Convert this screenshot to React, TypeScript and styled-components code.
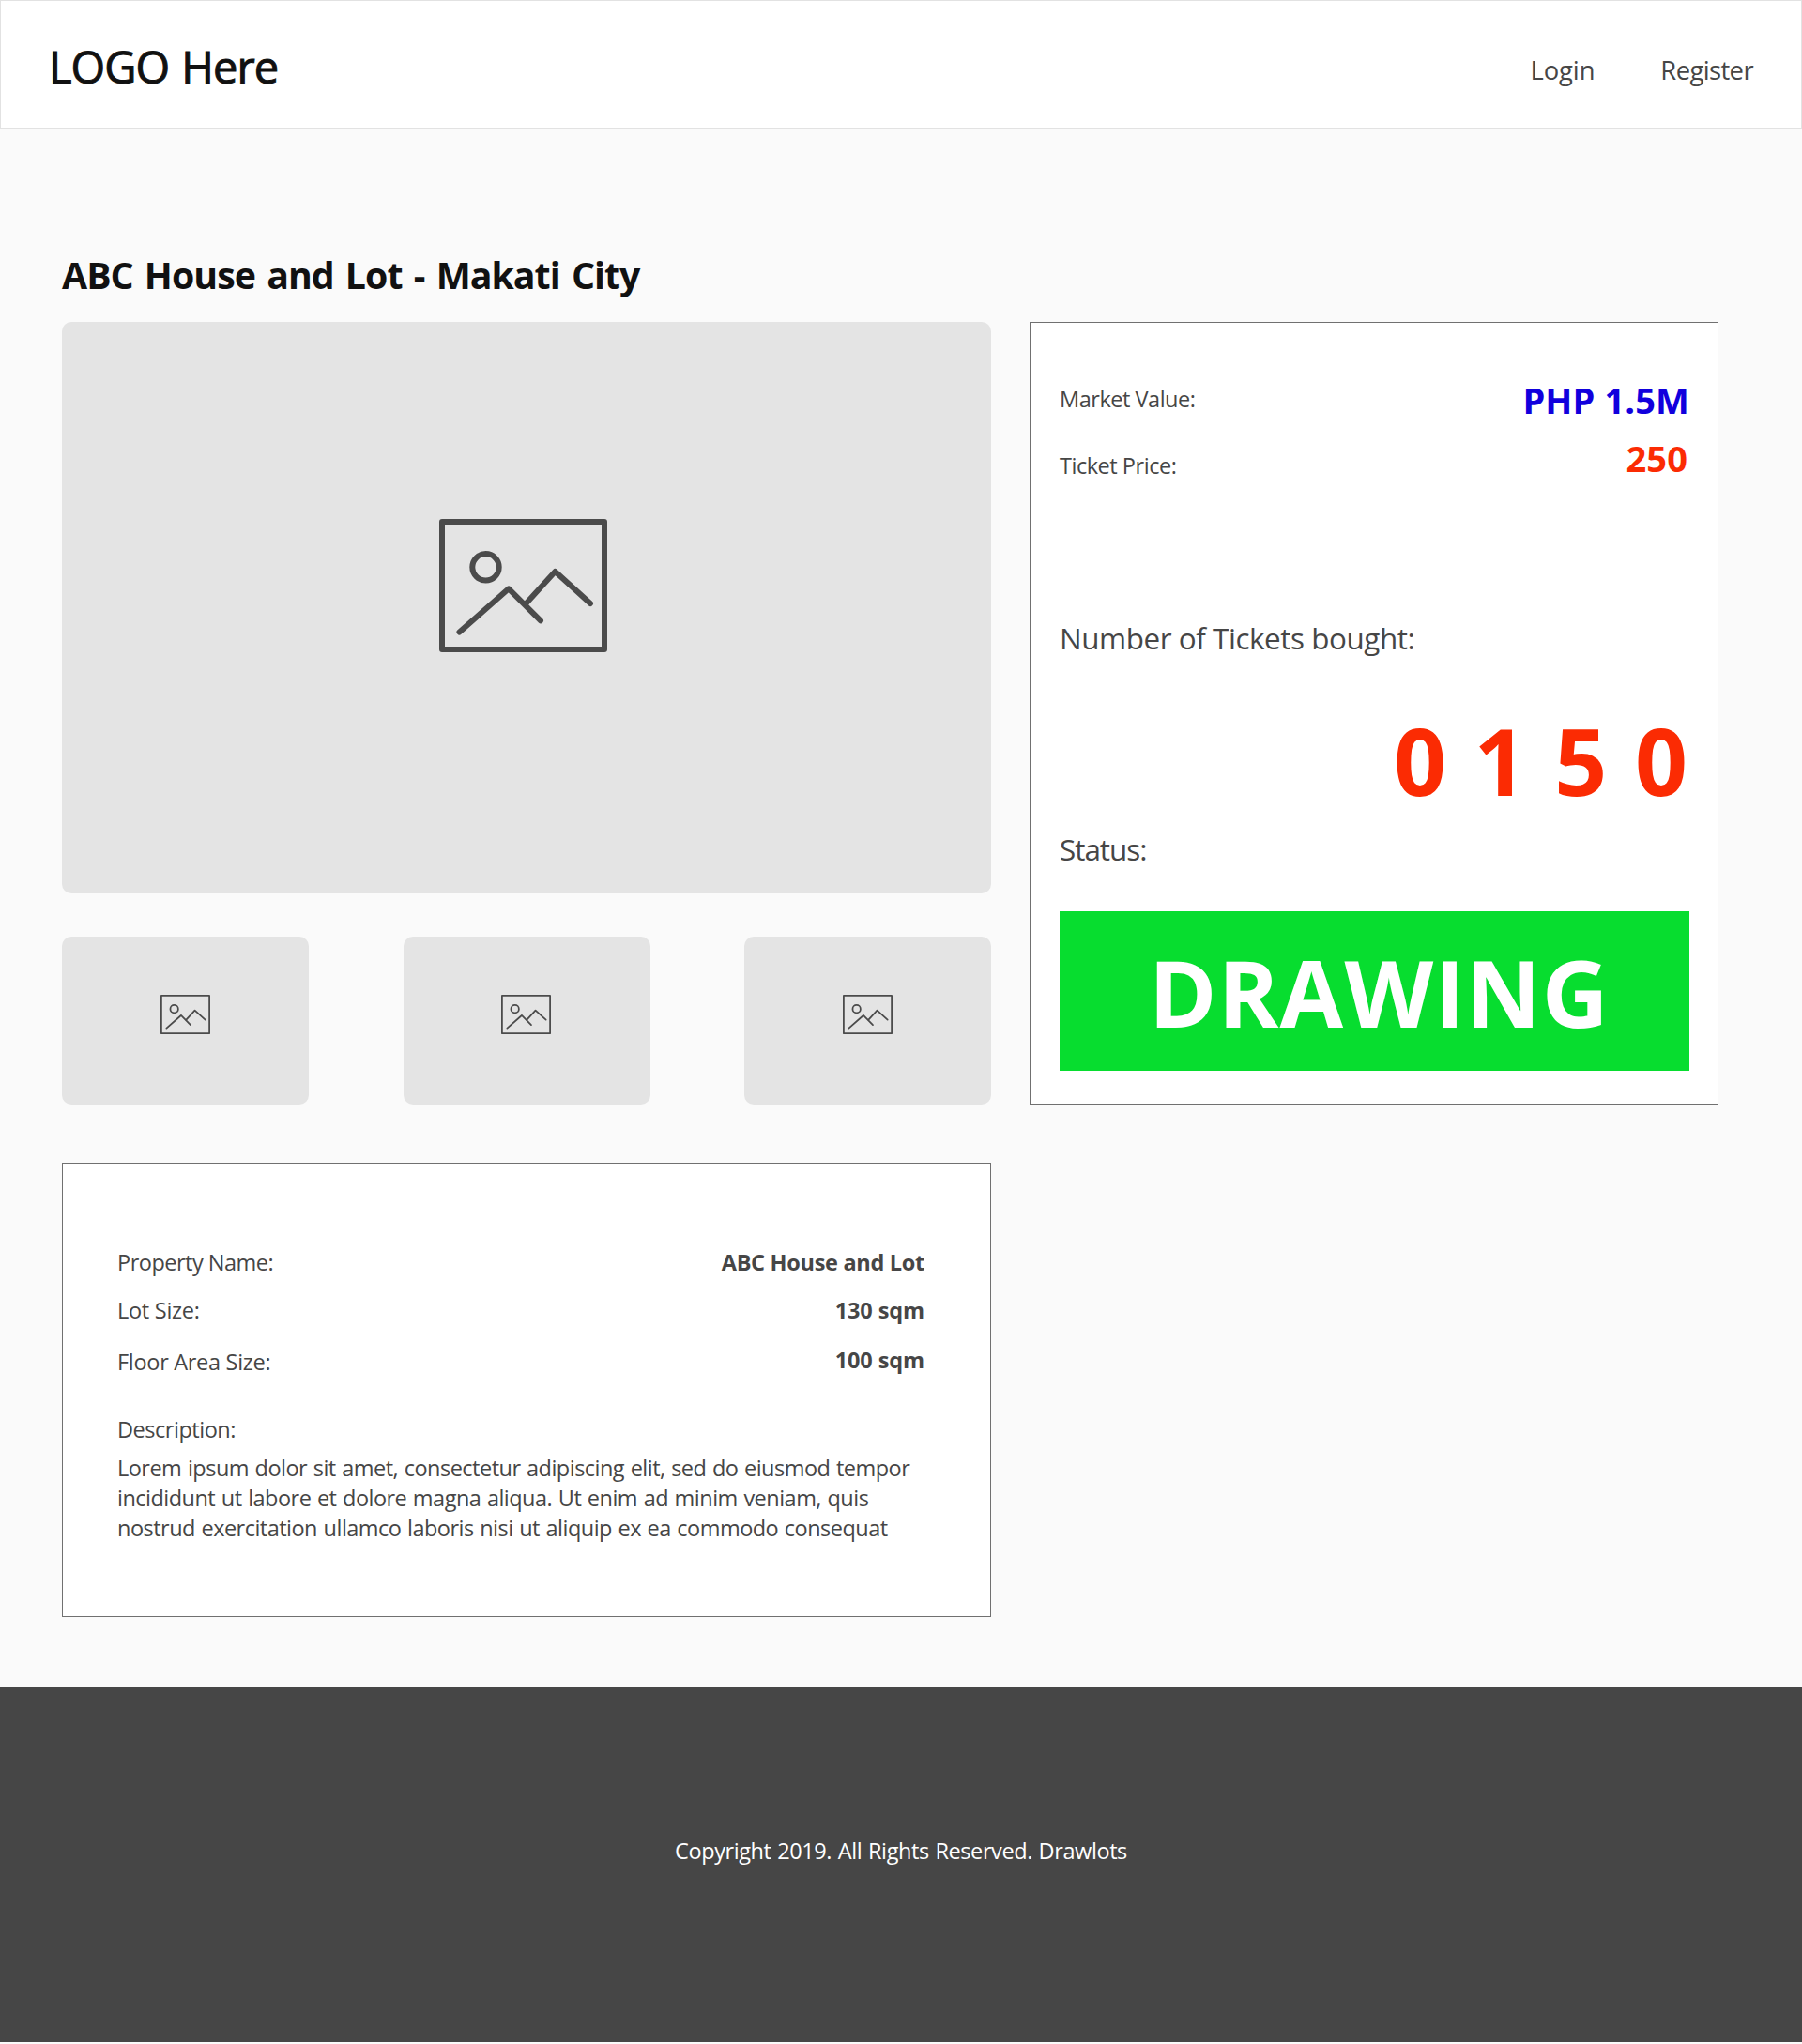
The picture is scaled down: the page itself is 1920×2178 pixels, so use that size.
import React from "react";
import styled, { createGlobalStyle } from "styled-components";

const colors = {
  page: "#fafafa",
  surface: "#ffffff",
  ink: "#111111",
  text: "#464646",
  line: "#707070",
  headerLine: "#e2e2e2",
  placeholder: "#e4e4e4",
  blue: "#1100dd",
  red: "#fb2b03",
  green: "#07dd2f",
};

const GlobalStyle = createGlobalStyle`
  *, *::before, *::after { box-sizing: border-box; }
  body {
    margin: 0;
    background: ${colors.page};
    color: ${colors.text};
    font-family: "Open Sans", "Noto Sans", sans-serif;
    font-kerning: normal;
  }
  h1, p, dl, dt, dd { margin: 0; }
`;

const Page = styled.div`
  width: 1920px;
  height: 2178px;
  display: flex;
  flex-direction: column;
`;

const Header = styled.header`
  display: flex;
  justify-content: space-between;
  align-items: flex-start;
  height: 137px;
  padding: 38px 51px 0 51px;
  background: ${colors.surface};
  border: 1px solid ${colors.headerLine};
`;

const Logo = styled.div`
  font-size: 47px;
  line-height: 64px;
  letter-spacing: -0.95px;
  word-spacing: 2px;
  color: ${colors.ink};
  -webkit-text-stroke: 1px ${colors.ink};
`;

const Nav = styled.nav`
  display: flex;
  gap: 70px;
  padding-top: 17px;
`;

const NavLink = styled.a<{ $tracking: number }>`
  font-size: 27.4px;
  line-height: 38px;
  letter-spacing: ${(p) => p.$tracking}px;
`;

const Main = styled.main`
  height: 1661px;
  padding: 129px 89px 0 66px;
`;

const Title = styled.h1`
  margin-bottom: 23px;
  font-size: 39.3px;
  line-height: 54px;
  font-weight: 700;
  letter-spacing: -0.98px;
  word-spacing: 3px;
  color: ${colors.ink};
`;

const Columns = styled.div`
  display: grid;
  grid-template-columns: 990px 734px;
  column-gap: 41px;
  align-items: start;
`;

const Hero = styled.div`
  display: flex;
  align-items: center;
  justify-content: center;
  height: 609px;
  padding: 0 7px 47px 0;
  border-radius: 10px;
  background: ${colors.placeholder};
`;

const Thumbs = styled.div`
  display: flex;
  justify-content: space-between;
  margin-top: 46px;
`;

const Thumb = styled.div`
  display: flex;
  align-items: center;
  justify-content: center;
  width: 263px;
  height: 179px;
  padding: 0 1px 13px 0;
  border-radius: 10px;
  background: ${colors.placeholder};
`;

const Picture = styled.svg<{ $width: number }>`
  display: block;
  width: ${(p) => p.$width}px;
  height: auto;
  fill: none;
  stroke: #4b4b4b;
  stroke-width: 6;
  stroke-linecap: round;
  stroke-linejoin: round;
`;

const Card = styled.section`
  background: ${colors.surface};
  border: 1px solid ${colors.line};
`;

const DetailsCard = styled(Card)`
  height: 484px;
  margin-top: 62px;
  padding: 89px 70px 0 58px;
`;

const DetailRow = styled.div<{ $gap?: number }>`
  display: flex;
  justify-content: space-between;
  align-items: flex-start;
  margin-top: ${(p) => p.$gap ?? 0}px;
`;

const Label = styled.dt<{ $tracking: number; $drop?: number }>`
  padding-top: ${(p) => p.$drop ?? 0}px;
  font-size: 23.5px;
  line-height: 32px;
  letter-spacing: ${(p) => p.$tracking}px;
`;

const Value = styled.dd<{ $tracking: number }>`
  font-size: 23.5px;
  line-height: 32px;
  font-weight: 700;
  letter-spacing: ${(p) => p.$tracking}px;
`;

const Description = styled.p`
  margin-top: 9px;
  margin-right: -10px;
  font-size: 23.5px;
  line-height: 32px;
  letter-spacing: -0.52px;
  word-spacing: 1px;
  white-space: pre-line;
`;

const DrawCard = styled(Card)`
  height: 834px;
  padding: 56px 30px 0 31px;
`;

const Prices = styled.div`
  display: flex;
  justify-content: space-between;
  height: 114px;
`;

const PriceLabels = styled.div`
  display: flex;
  flex-direction: column;
  gap: 39px;
  padding-top: 9px;
`;

const PriceValues = styled.div`
  display: flex;
  flex-direction: column;
  align-items: flex-end;
  gap: 10px;
`;

const PriceLabel = styled.span`
  font-size: 23.5px;
  line-height: 32px;
  letter-spacing: -0.47px;
`;

const Price = styled.span<{ $color: string; $inset?: number }>`
  padding-right: ${(p) => p.$inset ?? 0}px;
  font-size: 38px;
  line-height: 52px;
  font-weight: 700;
  letter-spacing: 0.1px;
  color: ${(p) => p.$color};
`;

const Heading = styled.p<{ $gap: number; $tracking: number }>`
  margin-top: ${(p) => p.$gap}px;
  font-size: 31.4px;
  line-height: 42px;
  letter-spacing: ${(p) => p.$tracking}px;
`;

const Counter = styled.p`
  margin-top: 42px;
  font-size: 98px;
  line-height: 134px;
  font-weight: 700;
  letter-spacing: 2.08px;
  text-align: right;
  color: ${colors.red};
`;

const Status = styled.div`
  display: flex;
  align-items: center;
  justify-content: center;
  height: 170px;
  margin-top: 45px;
  padding: 2px 0 0 10px;
  background: ${colors.green};
  color: #ffffff;
  font-size: 98px;
  line-height: 134px;
  font-weight: 700;
  letter-spacing: 1.2px;
`;

const Footer = styled.footer`
  height: 378px;
  padding-top: 158px;
  background: ${colors.text};
  color: #ffffff;
  font-size: 23.5px;
  line-height: 32px;
  letter-spacing: -0.41px;
  word-spacing: 1px;
  text-align: center;
`;

function PictureIcon({ width }: { width: number }) {
  return (
    <Picture $width={width} viewBox="0 0 179 142" aria-hidden="true">
      <rect x="3" y="3" width="173" height="136" />
      <circle cx="49.5" cy="51.3" r="14.2" />
      <path d="M21.5 120.5 74 74.3 108 108.3" />
      <path d="M92.5 90 123.5 56 161 90" />
    </Picture>
  );
}

const details = [
  { label: "Property Name:", value: "ABC House and Lot", labelTracking: -0.5, valueTracking: -0.3 },
  { label: "Lot Size:", value: "130 sqm", labelTracking: -0.27, valueTracking: -0.1, gap: 19 },
  { label: "Floor Area Size:", value: "100 sqm", labelTracking: -0.3, valueTracking: -0.1, gap: 21, drop: 2 },
  { label: "Description:", labelTracking: -0.47, gap: 40 },
];

const description = `Lorem ipsum dolor sit amet, consectetur adipiscing elit, sed do eiusmod tempor
incididunt ut labore et dolore magna aliqua. Ut enim ad minim veniam, quis
nostrud exercitation ullamco laboris nisi ut aliquip ex ea commodo consequat`;

export default function App() {
  return (
    <Page>
      <GlobalStyle />
      <Header>
        <Logo>LOGO Here</Logo>
        <Nav>
          <NavLink $tracking={-0.1}>Login</NavLink>
          <NavLink $tracking={-0.6}>Register</NavLink>
        </Nav>
      </Header>
      <Main>
        <Title>ABC House and Lot - Makati City</Title>
        <Columns>
          <div>
            <Hero>
              <PictureIcon width={179} />
            </Hero>
            <Thumbs>
              {[1, 2, 3].map((n) => (
                <Thumb key={n}>
                  <PictureIcon width={53} />
                </Thumb>
              ))}
            </Thumbs>
            <DetailsCard>
              <dl>
                {details.map((d) => (
                  <DetailRow key={d.label} $gap={d.gap}>
                    <Label $tracking={d.labelTracking} $drop={d.drop}>{d.label}</Label>
                    {d.value && <Value $tracking={d.valueTracking ?? 0}>{d.value}</Value>}
                  </DetailRow>
                ))}
              </dl>
              <Description>{description}</Description>
            </DetailsCard>
          </div>
          <DrawCard>
            <Prices>
              <PriceLabels>
                <PriceLabel>Market Value:</PriceLabel>
                <PriceLabel>Ticket Price:</PriceLabel>
              </PriceLabels>
              <PriceValues>
                <Price $color={colors.blue}>PHP 1.5M</Price>
                <Price $color={colors.red} $inset={2}>250</Price>
              </PriceValues>
            </Prices>
            <Heading $gap={145} $tracking={-0.43}>Number of Tickets bought:</Heading>
            <Counter>0 1 5 0</Counter>
            <Heading $gap={7} $tracking={-1}>Status:</Heading>
            <Status>DRAWING</Status>
          </DrawCard>
        </Columns>
      </Main>
      <Footer>Copyright 2019. All Rights Reserved. Drawlots</Footer>
    </Page>
  );
}
